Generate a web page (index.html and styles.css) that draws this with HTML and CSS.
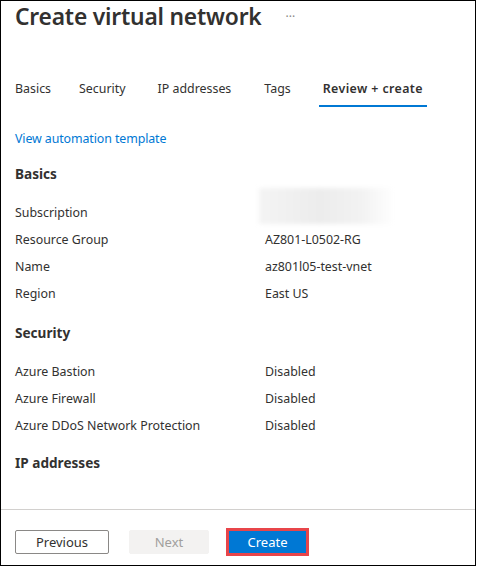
FILE: index.html
```html
<!DOCTYPE html>
<html>
<head>
<meta charset="utf-8">
<link rel="stylesheet" href="styles.css">
</head>
<body>
<div class="panel">
  <header class="header">
    <h1 class="title">Create virtual network</h1>
    <span class="more">···</span>
  </header>
  <nav class="tabs">
    <span class="tab">Basics</span>
    <span class="tab">Security</span>
    <span class="tab">IP addresses</span>
    <span class="tab">Tags</span>
    <span class="tab active">Review + create</span>
  </nav>
  <main class="content">
    <a class="link">View automation template</a>
    <h2 class="section">Basics</h2>
    <div class="rows">
      <span class="label">Subscription</span><span class="value"><span class="blur"></span></span>
      <span class="label">Resource Group</span><span class="value">AZ801-L0502-RG</span>
      <span class="label">Name</span><span class="value">az801l05-test-vnet</span>
      <span class="label">Region</span><span class="value">East US</span>
    </div>
    <h2 class="section section-security">Security</h2>
    <div class="rows">
      <span class="label">Azure Bastion</span><span class="value">Disabled</span>
      <span class="label">Azure Firewall</span><span class="value">Disabled</span>
      <span class="label">Azure DDoS Network Protection</span><span class="value">Disabled</span>
    </div>
    <h2 class="section section-ip">IP addresses</h2>
  </main>
  <footer class="footer">
    <button class="btn btn-secondary">Previous</button>
    <button class="btn btn-disabled">Next</button>
    <span class="highlight"><button class="btn btn-primary">Create</button></span>
  </footer>
</div>
</body>
</html>
```
FILE: styles.css
```css
* { box-sizing: border-box; }
html, body { margin: 0; padding: 0; background: #fff; }
body {
  font-family: "Noto Sans", "Open Sans", sans-serif;
  font-size: 12.4px;
  color: #323130;
}
.panel {
  width: 476px;
  height: 566px;
  border: 1px solid #000;
  display: flex;
  flex-direction: column;
}
.header {
  display: flex;
  align-items: center;
  height: 31px;
  padding-left: 14px;
}
.title {
  margin: 0;
  font-size: 22.8px;
  font-weight: 600;
  line-height: 31px;
  color: #323130;
  letter-spacing: -0.2px;
}
.more {
  margin-left: 24px;
  color: #8a8886;
  font-size: 12px;
  line-height: 31px;
}
.tabs {
  display: flex;
  margin-top: 47px;
  padding-left: 10px;
  gap: 19px;
}
.tab {
  padding: 0 4px 6px;
  line-height: 20px;
  border-bottom: 2px solid transparent;
  color: #323130;
}
.tab:nth-child(2) { margin-left: 1px; }
.tab:nth-child(3) { margin-left: 5px; }
.tab:nth-child(4) { margin-left: 6px; }
.tab:nth-child(5) { margin-left: 5px; }
.tab.active {
  font-weight: 600;
  letter-spacing: 0.4px;
  border-bottom-color: #0078d4;
}
.content {
  flex: 1;
  padding: 0 14px;
  display: flex;
  flex-direction: column;
  align-items: stretch;
}
.link {
  align-self: flex-start;
  margin-top: 22px;
  line-height: 20px;
  color: #0078d4;
  text-decoration: none;
  letter-spacing: -0.1px;
}
.section {
  margin: 15px 0 0;
  font-size: 13.6px;
  font-weight: 700;
  line-height: 20px;
  color: #323130;
}
.section-security { margin-top: 16px; }
.section-ip { margin-top: 14px; }
.rows {
  margin-top: 15px;
  display: grid;
  grid-template-columns: 250px 1fr;
  grid-auto-rows: 27px;
  line-height: 27px;
}
.label { white-space: nowrap; }
.value { position: relative; white-space: nowrap; }
.blur {
  position: absolute;
  left: -6px;
  top: -11px;
  width: 136px;
  height: 36px;
  background: linear-gradient(90deg, #f4f4f4 0%, #ececec 45%, #f2f2f2 75%, #fff 100%);
  filter: blur(2px);
}
.footer {
  height: 56px;
  border-top: 1px solid #d2d0ce;
  display: flex;
  align-items: flex-start;
  padding: 20px 14px 0;
}
.btn {
  font-family: inherit;
  font-size: 13px;
  height: 24px;
  padding: 0;
  border-radius: 2px;
  line-height: 22px;
}
.btn-secondary {
  width: 94px;
  background: #fff;
  border: 1px solid #8a8886;
  color: #323130;
}
.btn-disabled {
  width: 80px;
  margin-left: 20px;
  background: #f3f2f1;
  border: 1px solid #f3f2f1;
  color: #a19f9d;
}
.highlight {
  display: inline-flex;
  margin-left: 17px;
  margin-top: -2px;
  border: 3px solid #e8454a;
}
.btn-primary {
  width: 77px;
  height: 22px;
  border: none;
  border-radius: 0;
  background: #0078d4;
  color: #fff;
}
```
